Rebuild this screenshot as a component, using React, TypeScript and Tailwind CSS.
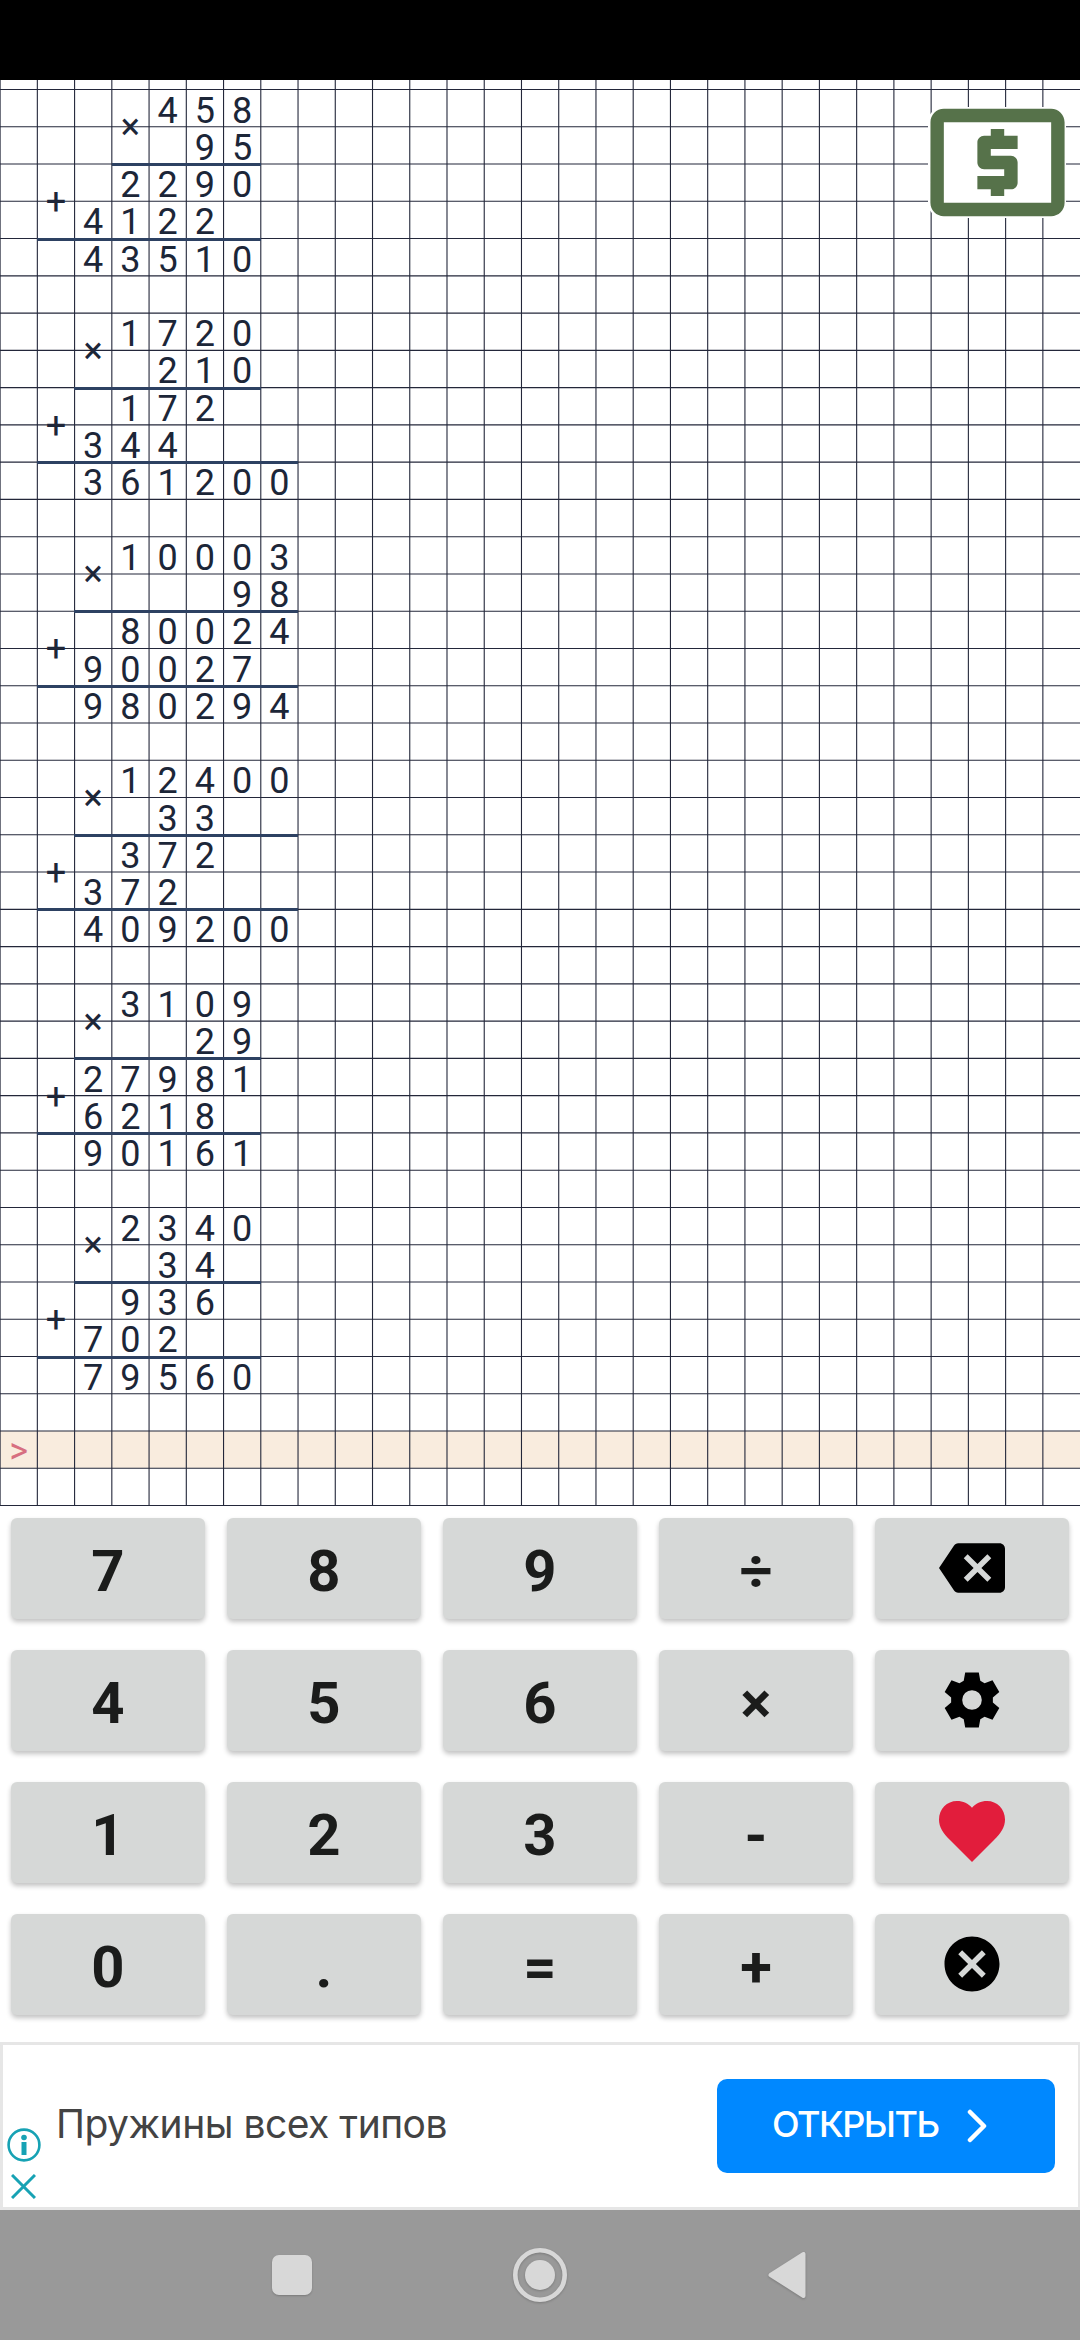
import React from 'react';
import { MdBackspace, MdCancel, MdLocalAtm } from 'react-icons/md';

const COLS = 29;
const ROWS = 38;
const CELL_W = 1080 / COLS;
const CELL_H = 37.265;
const TOP_GAP = 9.5;

interface Problem {
  mulCol: number; // column of the × sign, the first rule starts here
  endCol: number; // where the first rule ends
  sumEndCol: number;
  lines: string[];
}

const PROBLEMS: Problem[] = [
  { mulCol: 3, endCol: 7, sumEndCol: 7, lines: ['    458', '     95', '   2290', '  4122', '  43510'] },
  { mulCol: 2, endCol: 7, sumEndCol: 8, lines: ['   1720', '    210', '   172', '  344', '  361200'] },
  { mulCol: 2, endCol: 8, sumEndCol: 8, lines: ['   10003', '      98', '   80024', '  90027', '  980294'] },
  { mulCol: 2, endCol: 8, sumEndCol: 8, lines: ['   12400', '    33', '   372', '  372', '  409200'] },
  { mulCol: 2, endCol: 7, sumEndCol: 7, lines: ['   3109', '     29', '  27981', '  6218', '  90161'] },
  { mulCol: 2, endCol: 7, sumEndCol: 7, lines: ['   2340', '    34', '   936', '  702', '  79560'] },
];

const place = (row: number, col: number, rowSpan = 1, colSpan = 1): React.CSSProperties => ({
  gridRow: `${row + 1} / span ${rowSpan}`,
  gridColumn: `${col + 1} / span ${colSpan}`,
});

const PaperLines: React.FC = () => (
  <svg className="absolute inset-0" width="1080" height="1427" viewBox="0 0 1080 1427" stroke="#23273a" strokeWidth="1.1">
    {Array.from({ length: COLS }, (_, i) => (
      <line key={`v${i}`} x1={i * CELL_W + 0.1} x2={i * CELL_W + 0.1} y1="0" y2={TOP_GAP + ROWS * CELL_H} />
    ))}
    {Array.from({ length: ROWS + 1 }, (_, i) => (
      <line key={`h${i}`} x1="0" x2="1080" y1={TOP_GAP + i * CELL_H} y2={TOP_GAP + i * CELL_H} />
    ))}
  </svg>
);

const Rule: React.FC<{ row: number; from: number; to: number }> = ({ row, from, to }) => (
  <div className="relative z-10 h-[3px] -mt-px bg-[#2d4162]" style={place(row, from, 1, to - from)} />
);

const ProblemBlock: React.FC<{ problem: Problem; row: number }> = ({ problem, row }) => (
  <>
    {problem.lines.map((line, i) =>
      line.split('').map((ch, col) =>
        ch === ' ' ? null : (
          <span key={`${i}-${col}`} className="flex items-center justify-center pt-[5px]" style={place(row + i, col)}>
            {ch}
          </span>
        )
      )
    )}
    <span className="flex items-center justify-center pt-px" style={place(row, problem.mulCol, 2)}>×</span>
    <span className="flex items-center justify-center pt-[2px]" style={place(row + 2, 1, 2)}>+</span>
    <Rule row={row + 2} from={problem.mulCol} to={problem.endCol} />
    <Rule row={row + 4} from={1} to={problem.sumEndCol} />
  </>
);

const HeartIcon: React.FC = () => (
  <svg width="66" height="61" viewBox="0 0 66 61" fill="#e21d3c">
    <path d="M33 61 11 39C4 32 0 26 0 18.500C0 8 8 0 18 0c6 0 11.500 2.500 15 6.800C36.500 2.500 42 0 48 0c10 0 18 8 18 18.500C66 26 62 32 55 39Z" />
  </svg>
);

// One tooth of the gear, repeated every 60 degrees
const TOOTH = [[-8.3, -19.3], [-6.8, -27.6], [6.8, -27.6], [8.3, -19.3]];

const gearPoints = Array.from({ length: 6 }, (_, i) => {
  const a = (i * Math.PI) / 3;
  return TOOTH.map(([x, y]) => `${x * Math.cos(a) - y * Math.sin(a)},${x * Math.sin(a) + y * Math.cos(a)}`).join(' L');
});

const GearIcon: React.FC = () => (
  <svg width="66" height="66" viewBox="-33 -33 66 66" fill="currentColor">
    <path fillRule="evenodd" d={`M${gearPoints.join(' L')}Z M-9.8 0a9.8 9.8 0 1 0 19.6 0a9.8 9.8 0 1 0 -19.6 0Z`} />
  </svg>
);

const KEYS: { id: string; label: React.ReactNode }[] = [
  { id: '7', label: '7' },
  { id: '8', label: '8' },
  { id: '9', label: '9' },
  { id: 'div', label: '÷' },
  { id: 'back', label: <MdBackspace size={66} /> },
  { id: '4', label: '4' },
  { id: '5', label: '5' },
  { id: '6', label: '6' },
  { id: 'mul', label: '×' },
  { id: 'settings', label: <GearIcon /> },
  { id: '1', label: '1' },
  { id: '2', label: '2' },
  { id: '3', label: '3' },
  { id: 'sub', label: '-' },
  { id: 'like', label: <HeartIcon /> },
  { id: '0', label: '0' },
  { id: 'dot', label: '.' },
  { id: 'eq', label: '=' },
  { id: 'add', label: '+' },
  { id: 'clear', label: <MdCancel size={66} /> },
];

const Key: React.FC<{ label: React.ReactNode }> = ({ label }) => (
  <button
    className={`h-[101px] flex items-center justify-center rounded-[6px] bg-[#d6d8d7] shadow-[0_3px_5px_rgba(0,0,0,0.24)] text-[58px] leading-none font-bold
    ${typeof label === 'string' ? 'pt-[5px] text-[#1b1c1b]' : 'pb-[2px] text-black'}`}
  >
    {label}
  </button>
);

const AdBanner: React.FC = () => (
  <div className="h-[168px] flex border-[3px] border-r-2 border-[#e6e6e6] bg-white">
    <div className="w-[41px] flex flex-col items-center justify-end gap-[12px] pb-[8px] text-[#17a2b4]">
      <svg width="34" height="34" viewBox="0 0 34 34" fill="none" stroke="currentColor">
        <circle cx="17" cy="17" r="15.400" strokeWidth="2.600" />
        <circle cx="17" cy="9.500" r="2.800" fill="currentColor" stroke="none" />
        <path d="M17 14v13" strokeWidth="5" />
      </svg>
      <svg width="25" height="25" viewBox="0 0 25 25" fill="none" stroke="currentColor" strokeWidth="3">
        <path d="M1 1l23 23M24 1L1 24" />
      </svg>
    </div>
    <p className="flex-1 pl-[12px] pt-[55px] font-['Inter','Open_Sans',sans-serif] text-[39px] leading-[48px] tracking-[-0.5px] text-[#434343] whitespace-nowrap">
      Пружины всех типов
    </p>
    <button className="mt-[34px] mr-[23px] w-[338px] h-[94px] flex items-center rounded-[10px] bg-[#0088ff] pl-[55px] text-white font-['Inter','Open_Sans',sans-serif] text-[36px] font-medium leading-none">
      <span className="w-[195px] text-left whitespace-nowrap pb-[4px] tracking-[-1.5px]">ОТКРЫТЬ</span>
      <svg width="20" height="34" viewBox="0 0 20 34" fill="none" stroke="currentColor" strokeWidth="4.500" strokeLinecap="round" strokeLinejoin="round">
        <path d="M3 3l14 14L3 31" />
      </svg>
    </button>
  </div>
);

const NavBar: React.FC = () => (
  <div className="h-[130px] bg-[#999999] flex items-center pl-[272px] text-[#d8d8d8]">
    <div className="w-10 h-10 rounded-[7px] bg-[#d8d8d8] shadow-[0_1px_2px_rgba(0,0,0,0.2)]" />
    <svg className="ml-[200px] drop-shadow-[0_1px_1px_rgba(0,0,0,0.2)]" width="56" height="56" viewBox="0 0 56 56" fill="none" stroke="currentColor">
      <circle cx="28" cy="28" r="24.700" strokeWidth="4.600" />
      <circle cx="28" cy="28" r="15" fill="currentColor" stroke="none" />
    </svg>
    <svg className="ml-[200px] drop-shadow-[0_1px_1px_rgba(0,0,0,0.2)]" width="38" height="48" viewBox="0 0 38 48" fill="currentColor" stroke="currentColor" strokeWidth="4" strokeLinejoin="round">
      <path d="M35.500 3v42L2.500 24Z" />
    </svg>
  </div>
);

const App: React.FC = () => (
  <div className="w-[1080px] h-[2340px] flex flex-col bg-white overflow-hidden font-['Roboto',sans-serif]">
    <div className="h-20 shrink-0 bg-black" />

    <div className="relative h-[1426px] shrink-0 pt-[9.5px]">
      <div className="grid grid-cols-29 grid-rows-38 h-[1416.07px] text-[36px] leading-none text-[#1c2638]">
        <div className="bg-[#f9ecde]" style={place(36, 0, 1, COLS)} />
        <span className="flex items-center justify-center pt-[2px] text-[#d76f80]" style={place(36, 0)}>&gt;</span>
        {PROBLEMS.map((problem, i) => (
          <ProblemBlock key={i} problem={problem} row={i * 6} />
        ))}
      </div>
      <PaperLines />
      <button className="absolute left-[928px] top-[27px] w-[138px] h-[111px] rounded-[15px] bg-white flex items-center justify-center text-[#56724a]">
        <MdLocalAtm className="shrink-0" size={161} />
      </button>
    </div>

    <div className="shrink-0 h-[536px] grid grid-cols-5 content-start gap-x-[22px] gap-y-[31px] px-[11px] pt-[12px]">
      {KEYS.map(key => (
        <Key key={key.id} label={key.label} />
      ))}
    </div>

    <AdBanner />
    <NavBar />
  </div>
);

export default App;
